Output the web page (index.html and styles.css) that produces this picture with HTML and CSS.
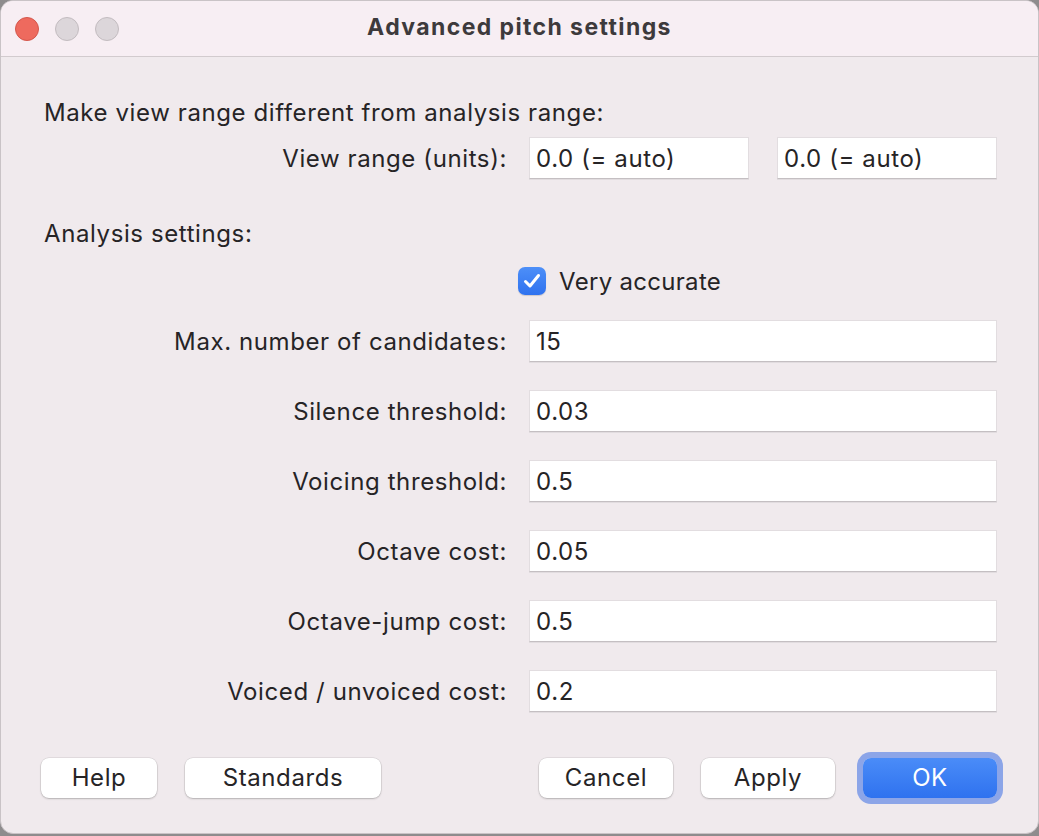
FILE: index.html
```html
<!DOCTYPE html>
<html>
<head>
<meta charset="utf-8">
<link rel="stylesheet" href="styles.css">
</head>
<body>
<div class="window">
  <div class="titlebar">
    <div class="lights">
      <span class="light close"></span>
      <span class="light"></span>
      <span class="light"></span>
    </div>
    <div class="title">Advanced pitch settings</div>
  </div>
  <div class="content">
    <div class="section">Make view range different from analysis range:</div>
    <div class="row first">
      <label class="label">View range (units):</label>
      <div class="pair">
        <div class="field short">0.0 (= auto)</div>
        <div class="field short">0.0 (= auto)</div>
      </div>
    </div>
    <div class="section second">Analysis settings:</div>
    <div class="checkrow">
      <span class="checkbox"><svg width="18" height="16" viewBox="0 0 18 16"><path d="M2.5 8.5 L7 13 L15.5 2.5" fill="none" stroke="#fff" stroke-width="3" stroke-linecap="round" stroke-linejoin="round"/></svg></span>
      <span class="checklabel">Very accurate</span>
    </div>
    <div class="rows">
      <div class="row"><label class="label">Max. number of candidates:</label><div class="field">15</div></div>
      <div class="row"><label class="label">Silence threshold:</label><div class="field">0.03</div></div>
      <div class="row"><label class="label">Voicing threshold:</label><div class="field">0.5</div></div>
      <div class="row"><label class="label">Octave cost:</label><div class="field">0.05</div></div>
      <div class="row"><label class="label">Octave-jump cost:</label><div class="field">0.5</div></div>
      <div class="row"><label class="label">Voiced / unvoiced cost:</label><div class="field">0.2</div></div>
    </div>
    <div class="buttons">
      <div class="group">
        <div class="btn help">Help</div>
        <div class="btn standards">Standards</div>
      </div>
      <div class="group">
        <div class="btn">Cancel</div>
        <div class="btn">Apply</div>
        <div class="btn primary">OK</div>
      </div>
    </div>
  </div>
</div>
</body>
</html>
```
FILE: styles.css
```css
html, body {
  margin: 0;
  padding: 0;
  background: #8e8c8d;
}
body {
  width: 1039px;
  height: 836px;
  overflow: hidden;
  font-family: Inter, "Open Sans", "DejaVu Sans", sans-serif;
  color: #262426;
}
.window {
  width: 1037px;
  height: 832px;
  border: 1px solid #c9c3c6;
  border-radius: 13px;
  background: #f0eaed;
  overflow: hidden;
}
.titlebar {
  height: 55px;
  background: #f7eef3;
  border-bottom: 1px solid #d2cbce;
  display: flex;
  align-items: center;
  position: relative;
}
.lights {
  display: flex;
  gap: 16px;
  padding-left: 14px;
}
.light {
  width: 24px;
  height: 24px;
  border-radius: 50%;
  background: #dcd6da;
  border: 1px solid #c3bcc0;
  box-sizing: border-box;
}
.light.close {
  background: #ee6a5e;
  border-color: #d4574c;
}
.title {
  position: absolute;
  left: 0;
  right: 0;
  top: 0;
  height: 55px;
  line-height: 53px;
  text-align: center;
  font-weight: 700;
  font-size: 23px;
  letter-spacing: 1.4px;
  color: #3d3a3c;
  pointer-events: none;
}
.content {
  padding: 43px 0 0 0;
  font-size: 24px;
  letter-spacing: 0.6px;
}
.section {
  line-height: 26px;
  padding-left: 43px;
}
.section.second {
  margin-top: 42px;
}
.row {
  display: grid;
  grid-template-columns: 506px 468px;
  column-gap: 22px;
  align-items: center;
  height: 42px;
}
.row.first {
  margin-top: 11px;
}
.label {
  text-align: right;
}
.pair {
  display: flex;
  gap: 28px;
}
.field {
  height: 42px;
  box-sizing: border-box;
  background: #fff;
  border: 1px solid #e2dde0;
  border-bottom-color: #c4bfc2;
  box-shadow: 0 1px 0 rgba(0,0,0,0.06);
  padding-left: 6px;
  line-height: 42px;
}
.field.short {
  width: 220px;
}
.checkrow {
  display: flex;
  align-items: center;
  gap: 13px;
  margin-top: 19px;
  padding-left: 517px;
  height: 30px;
}
.checklabel {
  letter-spacing: 0.3px;
}
.checkbox {
  width: 28px;
  height: 28px;
  border-radius: 7px;
  background: linear-gradient(#4d8ff8, #2f72ef);
  display: flex;
  align-items: center;
  justify-content: center;
  box-shadow: 0 1px 1px rgba(0,0,0,0.15);
}
.rows {
  margin-top: 24px;
  display: flex;
  flex-direction: column;
  gap: 28px;
}
.buttons {
  display: flex;
  justify-content: space-between;
  margin-top: 46px;
  padding: 0 41px 0 40px;
}
.group {
  display: flex;
  gap: 28px;
  align-items: center;
}
.btn {
  width: 134px;
  height: 40px;
  box-sizing: border-box;
  background: #fff;
  border-radius: 8px;
  box-shadow: 0 0 0 0.5px rgba(0,0,0,0.12), 0 1px 2px rgba(0,0,0,0.2);
  text-align: center;
  line-height: 40px;
  color: #262426;
}
.btn.help { width: 116px; }
.btn.standards { width: 196px; }
.btn.primary {
  background: linear-gradient(#4a8cf8, #2f72ef);
  color: #fff;
  box-shadow: 0 0 0 6px rgba(74, 118, 228, 0.6);
}
```
